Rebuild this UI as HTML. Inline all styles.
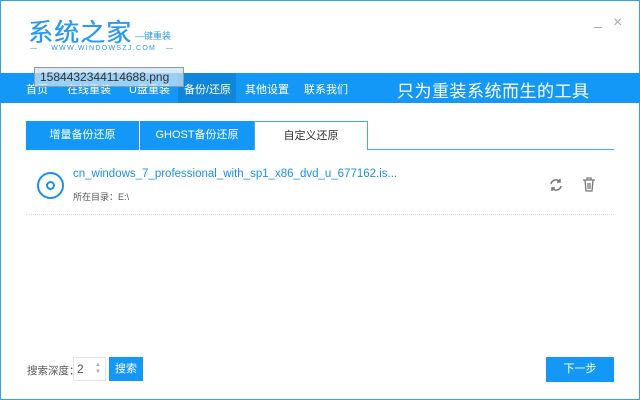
<!DOCTYPE html><html><head><meta charset="utf-8"><style>
*{margin:0;padding:0;box-sizing:border-box}
body{width:640px;height:400px;position:relative;overflow:hidden;background:#fff;font-family:"Liberation Sans","Noto Sans CJK SC",sans-serif}
.win{position:absolute;left:0;top:0;width:640px;height:400px;border:1px solid #3aa0f2}
.a{position:absolute;white-space:nowrap}
.nav{left:0;top:73px;width:640px;height:30px;background:#1398f8}
.tab{position:absolute;top:121px;height:29px;background:#1398f8;color:#fff;font-size:11px;text-align:center;line-height:29px}
</style></head><body><div class="win"></div>
<div class="a" style="left:28px;top:13px;font-size:25px;color:#2a9af0;letter-spacing:1px;text-shadow:0.5px 0 0 #2a9af0">系统之家</div>
<div class="a" style="left:135px;top:29px;font-size:9px;color:#2a9af0">—键重装</div>
<div class="a" style="left:30px;top:45px;font-size:7px;color:#2a9af0;letter-spacing:1.3px">—&nbsp;&nbsp;&nbsp; WWW.WINDOWSZJ.COM &nbsp;&nbsp;—</div>
<div class="a" style="left:594px;top:27px;width:8px;border-top:1px solid #aaa"></div>
<div class="a" style="left:613px;top:14px;font-size:16px;color:#aaa">×</div>
<div class="a nav"></div>
<div class="a" style="left:178px;top:73px;width:58px;height:30px;background:#0f86dc"></div>
<div class="a" style="left:0;top:73px;width:640px;height:30px">
<span class="a" style="left:26px;top:8px;color:#fff;font-size:11px">首页</span>
<span class="a" style="left:67px;top:8px;color:#fff;font-size:11px">在线重装</span>
<span class="a" style="left:129px;top:8px;color:#fff;font-size:11px">U盘重装</span>
<span class="a" style="left:184px;top:8px;color:#fff;font-size:11px">备份/还原</span>
<span class="a" style="left:245px;top:8px;color:#fff;font-size:11px">其他设置</span>
<span class="a" style="left:304px;top:8px;color:#fff;font-size:11px">联系我们</span>
<span class="a" style="left:397px;top:4px;color:#fff;font-size:17px;letter-spacing:0.5px">只为重装系统而生的工具</span>
</div>
<div class="a" style="left:34px;top:67px;width:150px;height:20px;border:1px solid #999;background:rgba(200,225,245,.75);font-size:12px;color:#333;line-height:18px;padding-left:5px">1584432344114688.png</div>
<div class="tab" style="left:26px;width:113px">增量备份还原</div>
<div class="tab" style="left:139px;width:115px;border-left:1px solid #fff">GHOST备份还原</div>
<div class="tab" style="left:254px;width:114px;background:#fff;color:#333;border:1px solid #4aa6f0;border-bottom:none">自定义还原</div>
<div class="a" style="left:367px;top:149px;width:247px;border-top:1px solid #4aa6f0"></div>
<div class="a" style="left:37px;top:172px;width:27px;height:27px;border:2px solid #1a8ff0;border-radius:50%"></div>
<div class="a" style="left:46px;top:181px;width:9px;height:9px;border:2px solid #1a8ff0;border-radius:50%"></div>
<div class="a" style="left:73px;top:168px;font-size:11.5px;color:#1a8ff0">cn_windows_7_professional_with_sp1_x86_dvd_u_677162.is...</div>
<div class="a" style="left:73px;top:190px;font-size:9px;color:#555">所在目录：E:\</div>
<svg class="a" style="left:549px;top:178px" width="14" height="14" viewBox="0 0 14 14" fill="none" stroke="#777" stroke-width="1.5"><path d="M2 6A5 5 0 0 1 11 4M12 8A5 5 0 0 1 3 10"/><path d="M11 1v3H8M3 13v-3h3"/></svg>
<svg class="a" style="left:582px;top:177px" width="14" height="15" viewBox="0 0 14 15" fill="none" stroke="#777" stroke-width="1.3"><path d="M1 3h12M5 3V1h4v2M3 3l1 11h6l1-11M6 6v6M8 6v6"/></svg>
<div class="a" style="left:26px;top:214px;width:588px;border-top:1px dotted #ddd"></div>
<div class="a" style="left:27px;top:363px;font-size:10.5px;color:#555">搜索深度：</div>
<div class="a" style="left:73px;top:357px;width:33px;height:24px;border:1px solid #e4e4e4;font-size:12px;color:#555;padding:4px 0 0 3px">2</div>
<div class="a" style="left:95px;top:362px;font-size:6px;color:#aaa;line-height:7px">▲<br>▼</div>
<div class="a" style="left:109px;top:357px;width:34px;height:24px;background:#1398f8;color:#fff;font-size:11px;text-align:center;line-height:24px">搜索</div>
<div class="a" style="left:546px;top:357px;width:68px;height:25px;background:#1398f8;color:#fff;font-size:11px;text-align:center;line-height:25px">下一步</div>
</body></html>
